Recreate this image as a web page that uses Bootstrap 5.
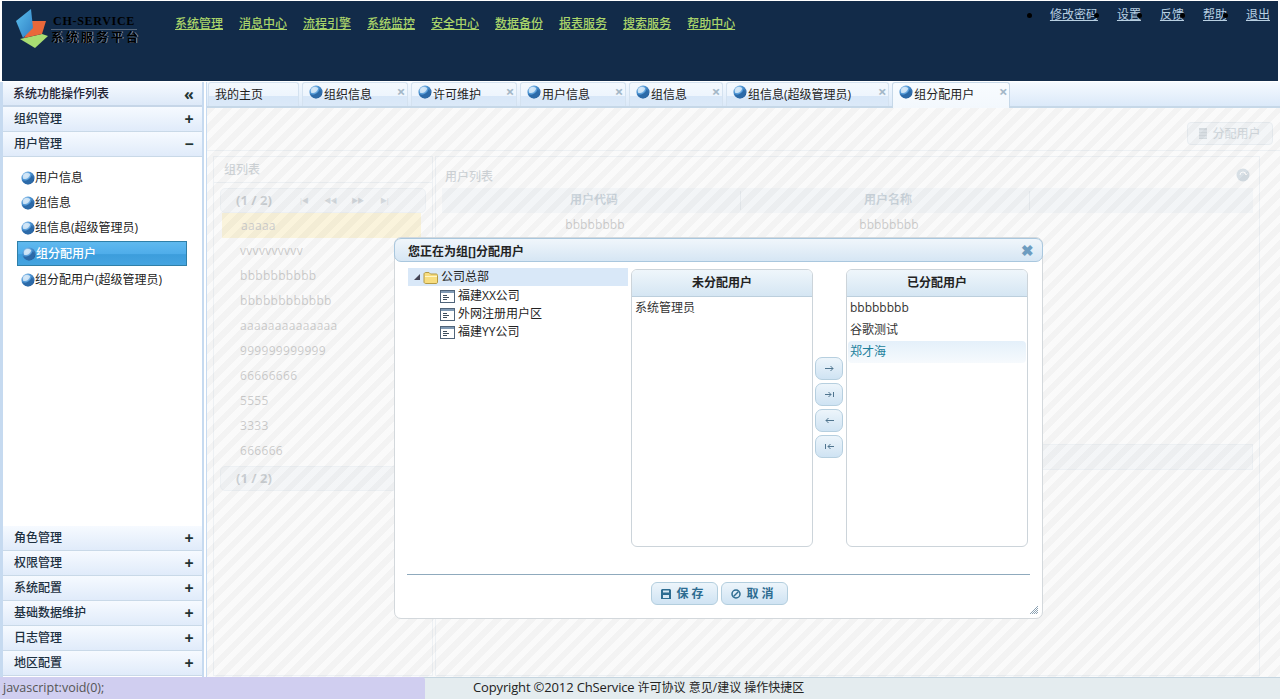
<!DOCTYPE html>
<html lang="zh">
<head>
<meta charset="utf-8">
<title>ChService</title>
<link href="https://cdn.jsdelivr.net/npm/bootstrap@5.3.0/dist/css/bootstrap.min.css" rel="stylesheet">
<style>
html,body{height:699px;overflow:hidden;background:#fff}
body{font-family:"Open Sans","Noto Sans CJK SC",sans-serif;font-size:12px;line-height:18px;color:#222}
.shell{position:relative;height:699px;width:1280px}
/* header */
.topbar{height:80px;margin:1px 2px 1px 2px;background:#122b49;flex:none}
.logo-box{width:173px;padding:7px 0 0 13px;position:relative;height:60px;flex:none}
.logo-en{position:absolute;left:49px;top:12px;width:86px;text-align:center;font-family:"Liberation Serif",serif;font-weight:700;font-size:12px;letter-spacing:.7px;color:#000;line-height:16px;white-space:nowrap;border-bottom:1px solid #56677c}
.logo-cn{position:absolute;left:49px;top:29px;width:90px;font-size:12px;letter-spacing:3px;color:#000;line-height:16px;white-space:nowrap;text-shadow:1px 0 0 rgba(255,255,255,.5);font-weight:700}
.mainnav{gap:16px;padding-top:14px}
.mainnav a{color:#aad46a;text-decoration:underline;font-size:12px;font-weight:500}
.usernav{margin:5px 0 0 auto;padding-right:8px}
.usernav li{display:flex;align-items:center;margin-left:-4px}
.usernav i{width:5px;height:5px;border-radius:50%;background:#000;margin-right:18px;position:relative;z-index:2}
.usernav a{color:#b9d0e2;text-decoration:underline;font-size:12px}
/* sidebar */
.body-row{height:595px}
.sidebar{width:204px;flex:none;border-left:3px solid #c6daf0;border-right:2px solid #c6daf0;margin-right:2px;background:#fff;padding-bottom:1px}
.side-title{height:25px;padding:0 0 0 10px;background:linear-gradient(#f6faff,#dde9f8);border-bottom:2px solid #c6d6e8;font-weight:500;color:#223}
.side-row{height:25px;padding:0 0 0 11px;background:linear-gradient(#f6faff,#e0ebfa);border-bottom:1px solid #c9d9e8;color:#1d3040;font-weight:500}
.side-sign{width:26px;text-align:center;font-size:16px;font-weight:700;color:#233;line-height:20px}
.side-body{padding:8px 0 0 14px}
.side-item{height:25px;display:flex;align-items:center;padding-left:4px;width:170px;white-space:nowrap;color:#222}
.side-item.cur{margin:1px 0;background:linear-gradient(#5fb9ef 0,#4fadea 50%,#3c9ddc 55%,#45a4e0 100%);border:1px solid #2f7fa8;color:#fff;font-weight:500}
.globe{width:14px;height:14px;flex:none}
/* tabs */
.workarea{min-width:0;border-left:1px solid #c6daf0;position:relative}
.tabstrip{height:26px;background:linear-gradient(#f5faff,#dbe9f9);border-bottom:2px solid #c6d8e8;padding-left:1px;gap:3px}
.tabx{height:24px;display:flex;position:relative;padding:3px 35px 0 6px;white-space:nowrap;border:1px solid #d4e2f0;border-bottom:0;border-radius:3px 3px 0 0;background:linear-gradient(#f4f9fe 0,#eef5fd 55%,#d8e7f8 56%,#dbe9f8 100%);color:#222}
.tabx.wide{padding-right:37px}
.tabx .globe{margin-top:-1px;margin-right:1px}
.tabx b{position:absolute;right:-1px;top:0;font-size:15px;font-weight:700;color:#a4b7c7;line-height:16px;width:14px;text-align:center}
.tabx.on{background:linear-gradient(#f8fcff,#f3f8fd);height:26px;border-color:#c6d8e8}
/* faded page under the mask */
.pane{height:569px;position:relative;background:#fff;overflow:hidden}
.pane-tool{height:43px;padding:14px 7px 0 0;border-bottom:1px solid #d3dfea}
.fadebtn{height:23px;width:86px;border:1px solid #c3d3e0;border-radius:4px;background:#e8f0f7;font-size:12px;line-height:21px;display:flex;align-items:center;justify-content:center;gap:5px;color:#7f94a4;font-weight:500}
.panel-l{width:220px;flex:none;margin:5px 2px 0 6px;border:1px solid #d3dfea;height:520px}
.panel-r{width:825px;margin:5px 0 0 0;border:1px solid #d3dfea;height:520px;position:relative}
.pan-h{height:26px;padding:4px 10px;border-bottom:1px solid #d3dfea;font-size:12px;color:#778793;font-weight:500}
.pan-hr{height:31px;padding:11px 9px 0;border-bottom:0;display:flex;justify-content:space-between}
.pager{height:25px;margin:5px 6px 0 6px;border:1px solid #d3dfea;border-radius:5px;background:#eaf0f6;padding-left:15px;line-height:23px;color:#606e7a;font-weight:700;font-size:13px;display:flex}
.pager.lastp{margin-top:3px}
.pg{width:27px;text-align:center;font-size:7px;font-weight:400;color:#7b8c9a;letter-spacing:-1px}
.pg.first{margin-left:18px}
.faderow{height:25px;line-height:25px;padding-left:26px;font-size:12px;letter-spacing:.3px;color:#666}
.faderow.sel{background:#ffe99a;margin:0 11px 0 8px;padding-left:19px}
.colhead{height:25px;margin:0 6px;background:#e6eef5;font-weight:600;color:#64829a;position:relative}
.colhead span,.cellrow span{position:absolute;top:3px;width:100px;text-align:center}
.colhead em{position:absolute;top:3px;height:19px;border-left:1px solid #bccbd8}
.cellrow{height:24px;position:relative;color:#666;margin:0 6px;font-size:12px;letter-spacing:.1px}
.pager-r{position:absolute;left:6px;right:6px;top:287px;height:26px;border:1px solid #d3dfea;background:#eaf0f6}
.mask{position:absolute;inset:0;background:repeating-linear-gradient(135deg,rgba(238,238,238,.7) 0 6px,rgba(248,248,248,.7) 6px 12px)}
/* dialog */
.dlg{position:absolute;left:394px;top:237px;width:649px;height:382px;background:#fff;border:1px solid #d3d8dc;border-radius:7px;z-index:5}
.dlg-h{height:24px;margin:0 -1px;background:linear-gradient(#f0f6fb,#d6e6f4);border:1px solid #a9c7de;border-radius:7px;padding:4px 8px 0 13px;font-weight:700;color:#222}
.dlg-x{color:#6d9cc0;font-size:15px;font-weight:900;line-height:18px;margin-top:-2px}
.dlg-main{height:312px;padding:6px 0 0 13px}
.treebox{width:220px;flex:none;margin-right:3px}
.treenode{height:18px;line-height:18px;display:flex;align-items:center;white-space:nowrap;color:#222}
.treenode.rootn{background:#d9e8f8;padding-left:5px;margin-bottom:1px}
.treenode.leaf{padding-left:32px}
.treenode svg{margin-right:3px;flex:none}
.treenode.rootn svg{margin-right:2px}
.pick{width:182px;height:278px;flex:none;border:1px solid #ccd4da;border-radius:6px;overflow:hidden;margin-top:1px}
.pick-h{height:27px;background:linear-gradient(#eff6fb,#d5e6f3);border-bottom:1px solid #bccfdd;text-align:center;line-height:26px;font-weight:700;color:#222}
.pick-b{padding:0 1px}
.pick-i{height:22px;line-height:22px;padding-left:2px;color:#333}
.pick-i.hot{background:linear-gradient(#e4f0fa,#f6fafd);border-radius:4px;color:#1c7f9c}
.mover{width:33px;flex:none;padding:89px 0 0 2px;gap:3px}
.mv{width:28px;height:23px;padding:0;border:1px solid #b6cfdf;border-radius:7px;background:linear-gradient(#edf5fb,#cfe3f3);display:flex;align-items:center;justify-content:center}
.dlg-sep{margin:0 12px 0 12px;border-top:1px solid #8faabd;height:0}
.dlg-foot{padding:7px 0 0 1px;gap:3px}
.okbtn{width:67px;height:23px;padding:0;border:1px solid #b3cede;border-radius:6px;background:linear-gradient(#edf5fb,#cfe3f3);color:#2d6c91;font-weight:700;font-size:12px;line-height:20px;letter-spacing:3px;display:flex;align-items:center;justify-content:center}
.okbtn svg{margin-right:5px}
.grip{position:absolute;right:4px;bottom:4px}
/* footer */
.foot{height:22px;background:#e4ecef;border-top:1px solid #c5d5e0;padding-left:473px;line-height:18px;color:#222;font-size:12px;white-space:nowrap}
.lat13{font-size:13px;letter-spacing:-.15px}
.statusx{position:absolute;left:0;bottom:0;width:425px;height:22px;background:#d0cef0;border-top-right-radius:3px;color:#555;padding:1px 0 0 3px;font-size:12.5px;line-height:20px;z-index:6}
</style>
</head>
<body>
<svg width="0" height="0" class="position-absolute">
  <defs>
    <radialGradient id="gb" cx="35%" cy="30%" r="80%">
      <stop offset="0" stop-color="#cfe6f8"/><stop offset=".45" stop-color="#4f97d6"/><stop offset="1" stop-color="#1b4f8c"/>
    </radialGradient>
    <linearGradient id="lb" x1="0" y1="0" x2="1" y2="1"><stop offset="0" stop-color="#5cc0ee"/><stop offset="1" stop-color="#2f7fc4"/></linearGradient>
    <symbol id="globe" viewBox="0 0 15 15">
      <circle cx="7.5" cy="7.5" r="7" fill="url(#gb)"/>
      <path d="M1.5 10C4 11 9 10.500 11.500 4.500C13 6 13.500 8 13 10C12 13 9.500 14.500 7 14.300C4.500 14 2.500 12.500 1.500 10Z" fill="#2c6aa8"/>
      <path d="M2.500 8.500C5 9 8.500 8 10 3.500C8 1.500 4 1.500 2.500 4C1.800 5.500 1.800 7 2.500 8.500Z" fill="#d6e9f8" opacity=".85"/>
    </symbol>
    <symbol id="leaf" viewBox="0 0 15 13">
      <rect x=".5" y=".5" width="14" height="12" fill="#fff" stroke="#50647a"/>
      <rect x="1" y="1" width="13" height="2" fill="#7f99b4"/>
      <path d="M3 5.500h4M3 7.500h6M3 9.500h4" stroke="#3c4c5c" fill="none"/>
    </symbol>
  </defs>
</svg>
<div class="shell d-flex flex-column">
  <header class="topbar d-flex align-items-start">
    <div class="logo-box">
      <svg width="34" height="41" viewBox="0 0 34 41">
        <path d="M5 31L27 26L33 28L20 40Z" fill="#a8dd72"/>
        <path d="M17 13L31 13L27 26L9 30Z" fill="#e9683a"/>
        <path d="M1 13L16 1L18 20L8 30Z" fill="url(#lb)"/>
      </svg>
      <div class="logo-en">CH-SERVICE</div>
      <div class="logo-cn">系统服务平台</div>
    </div>
    <nav class="mainnav d-flex">
      <a href="#">系统管理</a><a href="#">消息中心</a><a href="#">流程引擎</a><a href="#">系统监控</a><a href="#">安全中心</a><a href="#">数据备份</a><a href="#">报表服务</a><a href="#">搜索服务</a><a href="#">帮助中心</a>
    </nav>
    <ul class="usernav list-unstyled d-flex">
      <li><i></i><a href="#">修改密码</a></li>
      <li><i></i><a href="#">设置</a></li>
      <li><i></i><a href="#">反馈</a></li>
      <li><i></i><a href="#">帮助</a></li>
      <li><i></i><a href="#">退出</a></li>
    </ul>
  </header>
  <div class="body-row d-flex">
    <aside class="sidebar d-flex flex-column">
      <div class="side-title d-flex align-items-center justify-content-between"><span>系统功能操作列表</span><span class="side-sign">«</span></div>
      <div class="side-row d-flex align-items-center justify-content-between"><span>组织管理</span><span class="side-sign">+</span></div>
      <div class="side-row d-flex align-items-center justify-content-between"><span>用户管理</span><span class="side-sign">−</span></div>
      <div class="side-body flex-grow-1">
        <div class="side-item"><svg class="globe"><use href="#globe"/></svg>用户信息</div>
        <div class="side-item"><svg class="globe"><use href="#globe"/></svg>组信息</div>
        <div class="side-item"><svg class="globe"><use href="#globe"/></svg>组信息(超级管理员)</div>
        <div class="side-item cur"><svg class="globe"><use href="#globe"/></svg>组分配用户</div>
        <div class="side-item"><svg class="globe"><use href="#globe"/></svg>组分配用户(超级管理员)</div>
      </div>
      <div class="side-row d-flex align-items-center justify-content-between"><span>角色管理</span><span class="side-sign">+</span></div>
      <div class="side-row d-flex align-items-center justify-content-between"><span>权限管理</span><span class="side-sign">+</span></div>
      <div class="side-row d-flex align-items-center justify-content-between"><span>系统配置</span><span class="side-sign">+</span></div>
      <div class="side-row d-flex align-items-center justify-content-between"><span>基础数据维护</span><span class="side-sign">+</span></div>
      <div class="side-row d-flex align-items-center justify-content-between"><span>日志管理</span><span class="side-sign">+</span></div>
      <div class="side-row d-flex align-items-center justify-content-between"><span>地区配置</span><span class="side-sign">+</span></div>
    </aside>
    <main class="workarea flex-grow-1">
      <div class="tabstrip d-flex">
        <div class="tabx"><span>我的主页</span></div>
        <div class="tabx"><svg class="globe"><use href="#globe"/></svg><span>组织信息</span><b>×</b></div>
        <div class="tabx"><svg class="globe"><use href="#globe"/></svg><span>许可维护</span><b>×</b></div>
        <div class="tabx"><svg class="globe"><use href="#globe"/></svg><span>用户信息</span><b>×</b></div>
        <div class="tabx"><svg class="globe"><use href="#globe"/></svg><span>组信息</span><b>×</b></div>
        <div class="tabx wide"><svg class="globe"><use href="#globe"/></svg><span>组信息(超级管理员)</span><b>×</b></div>
        <div class="tabx on"><svg class="globe"><use href="#globe"/></svg><span>组分配用户</span><b>×</b></div>
      </div>
      <div class="pane">
        <div class="pane-tool d-flex justify-content-end"><div class="fadebtn"><svg width="8" height="11" viewBox="0 0 8 11"><path d="M0 0H8V11H0Z" fill="#7f94a4"/><path d="M0 3H8M0 6H8M0 9H8" stroke="#c5d5e5"/></svg><span>分配用户</span></div></div>
        <div class="d-flex">
          <section class="panel-l">
            <div class="pan-h">组列表</div>
            <div class="pager"><span>(1 / 2)</span><span class="pg first">|◀</span><span class="pg">◀◀</span><span class="pg">▶▶</span><span class="pg">▶|</span></div>
            <div class="faderow sel">aaaaa</div>
            <div class="faderow">vvvvvvvvvv</div>
            <div class="faderow">bbbbbbbbbb</div>
            <div class="faderow">bbbbbbbbbbbb</div>
            <div class="faderow">aaaaaaaaaaaaaa</div>
            <div class="faderow">999999999999</div>
            <div class="faderow">66666666</div>
            <div class="faderow">5555</div>
            <div class="faderow">3333</div>
            <div class="faderow">666666</div>
            <div class="pager lastp"><span>(1 / 2)</span></div>
          </section>
          <section class="panel-r">
            <div class="pan-h pan-hr"><span>用户列表</span><svg width="14" height="14" viewBox="0 0 14 14"><circle cx="7" cy="7" r="6.500" fill="#8aa5ba"/><path d="M4 7A3 3 0 0 1 10 7M10 7L8.500 5.500M10 7L11.500 5.500" stroke="#fff" fill="none"/></svg></div>
            <div class="colhead"><span style="left:102px">用户代码</span><em style="left:298px"></em><span style="left:396px">用户名称</span><em style="left:587px"></em></div>
            <div class="cellrow"><span style="left:103px">bbbbbbbb</span><span style="left:397px">bbbbbbbb</span></div>
            <div class="pager-r"></div>
          </section>
        </div>
        <div class="mask"></div>
      </div>
    </main>
  </div>
  <footer class="foot"><span class="lat13">Copyright ©2012 ChService</span> 许可协议 意见/建议 操作快捷区</footer>

  <div class="dlg">
    <div class="dlg-h d-flex justify-content-between"><span>您正在为组[]分配用户</span><span class="dlg-x">✖</span></div>
    <div class="dlg-main d-flex">
      <div class="treebox">
        <div class="treenode rootn">
          <svg width="8" height="8" viewBox="0 0 8 8"><path d="M7 1V7H1Z" fill="#445"/></svg>
          <svg width="16" height="13" viewBox="0 0 16 13"><path d="M1 3C1 2 2 1.500 3 1.500H6L7.500 3H13C14 3 14.500 3.500 14.500 4.500V11C14.500 12 14 12.500 13 12.500H3C2 12.500 1 12 1 11Z" fill="#f7dd80" stroke="#b49a45"/><path d="M2 5.500H14" stroke="#fff6c8"/></svg>
          <span>公司总部</span>
        </div>
        <div class="treenode leaf"><svg width="15" height="13"><use href="#leaf"/></svg>福建XX公司</div>
        <div class="treenode leaf"><svg width="15" height="13"><use href="#leaf"/></svg>外网注册用户区</div>
        <div class="treenode leaf"><svg width="15" height="13"><use href="#leaf"/></svg>福建YY公司</div>
      </div>
      <div class="pick">
        <div class="pick-h">未分配用户</div>
        <div class="pick-b"><div class="pick-i">系统管理员</div></div>
      </div>
      <div class="mover d-flex flex-column">
        <button type="button" class="btn mv" aria-label="右移"><svg width="9" height="7" viewBox="0 0 9 7"><path d="M0 3.500H8M5.500 1L8 3.500L5.500 6" fill="none" stroke="#50758f"/></svg></button>
        <button type="button" class="btn mv" aria-label="全部右移"><svg width="9" height="7" viewBox="0 0 9 7"><path d="M0 3.500H6M3.500 1L6 3.500L3.500 6M8.500 1V6" fill="none" stroke="#50758f"/></svg></button>
        <button type="button" class="btn mv" aria-label="左移"><svg width="9" height="7" viewBox="0 0 9 7"><path d="M9 3.500H1M3.500 1L1 3.500L3.500 6" fill="none" stroke="#50758f"/></svg></button>
        <button type="button" class="btn mv" aria-label="全部左移"><svg width="9" height="7" viewBox="0 0 9 7"><path d="M9 3.500H3M5.500 1L3 3.500L5.500 6M.5 1V6" fill="none" stroke="#50758f"/></svg></button>
      </div>
      <div class="pick">
        <div class="pick-h">已分配用户</div>
        <div class="pick-b">
          <div class="pick-i">bbbbbbbb</div>
          <div class="pick-i">谷歌测试</div>
          <div class="pick-i hot">郑才海</div>
        </div>
      </div>
    </div>
    <div class="dlg-sep"></div>
    <div class="dlg-foot d-flex justify-content-center">
      <button type="button" class="btn okbtn"><svg width="10" height="10" viewBox="0 0 10 10"><path d="M1 0H9L10 1V10H0V1Z" fill="#2d6c91"/><rect x="2" y="1.500" width="6" height="2" fill="#d8e8f4"/><rect x="2" y="6" width="6" height="3" fill="#d8e8f4"/></svg>保存</button>
      <button type="button" class="btn okbtn"><svg width="10" height="10" viewBox="0 0 10 10"><circle cx="5" cy="5" r="4" fill="none" stroke="#2d6c91" stroke-width="1.500"/><path d="M2.500 7.500L7.500 2.500" stroke="#2d6c91" stroke-width="1.500"/></svg>取消</button>
    </div>
    <svg class="grip" width="8" height="8" viewBox="0 0 8 8"><path d="M8 0L0 8M8 2L2 8M8 4L4 8M8 6L6 8" stroke="#6f8aa0" stroke-width=".8"/></svg>
  </div>
  <div class="statusx">javascript:void(0);</div>
</div>
</body>
</html>
